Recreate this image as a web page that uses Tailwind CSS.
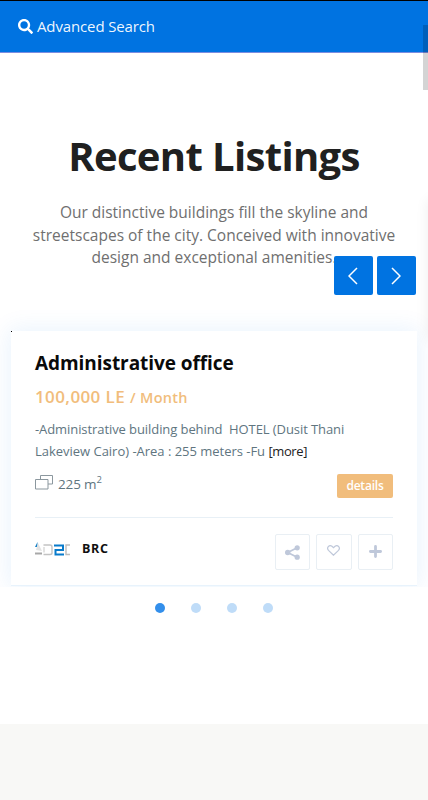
<!DOCTYPE html>
<html lang="en">
<head>
<meta charset="utf-8">
<meta name="viewport" content="width=device-width, initial-scale=1">
<title>Recent Listings</title>
<script src="https://cdn.jsdelivr.net/npm/@tailwindcss/browser@4"></script>
</head>
<body class="relative h-[800px] overflow-hidden bg-white font-['Open_Sans',sans-serif]">
<div class="flex h-full flex-col">
  <header class="flex h-[53px] shrink-0 items-center gap-1 border-t border-b border-t-black border-b-[#7d8de0] bg-[#0073e1] pb-px pl-[18px] text-white">
    <svg class="size-[15px]" viewBox="0 0 512 512" fill="currentColor"><path d="M505 442.700 405.300 343c-4.500-4.500-10.600-7-17-7H372c27.600-35.300 44-79.700 44-128C416 93.100 322.900 0 208 0S0 93.100 0 208s93.100 208 208 208c48.300 0 92.700-16.400 128-44v16.300c0 6.400 2.500 12.500 7 17l99.700 99.700c9.400 9.400 24.600 9.400 33.900 0l28.300-28.300c9.400-9.400 9.400-24.600.1-34zM208 336c-70.700 0-128-57.200-128-128 0-70.700 57.200-128 128-128 70.700 0 128 57.200 128 128 0 70.700-57.200 128-128 128z"/></svg>
    <span class="text-[15px] leading-6 tracking-[-0.13px] text-white/95">Advanced Search</span>
  </header>

  <main class="flex shrink-0 flex-col">
    <div class="pt-[79px] text-center">
      <h2 class="text-[40px] leading-[48px] font-bold tracking-[-0.65px] text-[#202020]">Recent Listings</h2>
      <p class="mt-[21px] text-[15.5px] leading-[22.5px] whitespace-nowrap text-[#6f6f6f]">Our distinctive buildings fill the skyline and<br>streetscapes of the city. Conceived with innovative<br>design and exceptional amenities.</p>
    </div>

    <div class="mt-[32.500px] h-[286px] overflow-hidden px-[11px] pt-[30px]">
      <article class="relative h-[255px] border-b border-[#e8f3fc] bg-white px-6 pt-[18px] shadow-[0_0_22px_2px_rgba(0,125,235,0.09)]">
        <i class="absolute top-0 left-0 size-px bg-black"></i>
        <h3 class="text-[19px] leading-7 font-bold tracking-[-0.06px] text-[#0a0a0a]">Administrative office</h3>
        <div class="mt-[7px] flex items-baseline gap-[5px] leading-[26px] font-semibold text-[#f1bd7c]">
          <span class="text-[17px] tracking-[0.4px]">100,000 LE</span><span class="text-[14.500px] tracking-[0.25px]">/ Month</span>
        </div>
        <p class="mt-[7px] text-[13px] leading-[22px] tracking-[-0.08px] whitespace-nowrap text-[#60757f]">-Administrative building behind&nbsp; HOTEL (Dusit Thani<br><span class="tracking-[-0.02px]">Lakeview Cairo) -Area : 255 meters -Fu </span><a class="text-[#222] tracking-[-0.4px]">[more]</a></p>
        <div class="mt-3 flex h-6 items-start justify-between">
          <div class="flex items-start gap-[5px] text-[#60757f]">
            <svg class="mt-px h-[15px] w-[18px]" viewBox="0 0 18 15" fill="none" stroke="#8b979e"><path d="M5.500 4.500v-4h12v8.500h-4.500M.5 4.500h12.500v9.500H.5z"/></svg>
            <span class="text-[13.500px] leading-5 tracking-[-0.15px]">225 m<sup class="top-[-6px] text-[9.500px]">2</sup></span>
          </div>
          <a class="flex h-6 w-[56px] items-center justify-center rounded-[2px] bg-[#f1bd7c] text-[12px] font-semibold tracking-[-0.2px] text-white">details</a>
        </div>
        <hr class="mt-[19px] border-t border-[#e8f0f6]">
        <div class="mt-4 flex h-9 items-start justify-between">
          <div class="flex items-center gap-3 pt-[5px]">
            <svg class="h-[14px] w-[35px]" viewBox="0 0 35 14" fill="none">
              <path d="M0 5 2.500 0v5z" fill="#147fc4"/>
              <path d="m3 1 4 8-6-1z" fill="#e2e2e2"/>
              <path d="M0 11.500h7" stroke="#a8a8a8" stroke-width="2"/>
              <path d="M8.500 3H15q2 0 2 2v6q0 1.500-2 1.500H8.500" stroke="#c3c3c3" stroke-width="1.400"/>
              <path d="M9 5v5.500" stroke="#d0d0d0" stroke-width="1.200"/>
              <path d="M19 3.500h9V8h-7.500v4.500H29" stroke="#087bcb" stroke-width="2"/>
              <path d="M35 3h-4v9.500h4" stroke="#bdbdbd" stroke-width="1.400"/>
            </svg>
            <span class="text-[12.500px] leading-5 font-bold tracking-[0.7px] text-[#101010]">BRC</span>
          </div>
          <div class="flex gap-[6px] text-[#bfc8da]">
            <a class="flex size-[36px] w-[35.500px] items-center justify-center rounded-[2px] border border-[#e9eff4]"><svg class="size-[15px]" viewBox="0 0 15 15" fill="currentColor"><circle cx="2.700" cy="7.500" r="2.700"/><circle cx="12.200" cy="2.800" r="2.600"/><circle cx="12.200" cy="12.200" r="2.600"/><path d="M12.200 2.800 2.700 7.500l9.500 4.700" fill="none" stroke="currentColor" stroke-width="1.700"/></svg></a>
            <a class="flex size-[36px] w-[35.500px] items-center justify-center rounded-[2px] border border-[#e9eff4]"><svg class="mb-[3px] h-[11px] w-[13px]" viewBox="0 0 13 11" fill="none" stroke="currentColor" stroke-width="1.200"><path d="M6.500 10.200 1.500 5.400C-.8 2.800 2.100-.6 5 1.200L6.500 2.600 8 1.200c2.900-1.800 5.800 1.600 3.500 4.200z"/></svg></a>
            <a class="flex size-[36px] w-[35.500px] items-center justify-center rounded-[2px] border border-[#e9eff4]"><svg class="mb-px size-[13px]" viewBox="0 0 13 13" stroke="currentColor" stroke-width="2.800" stroke-linecap="round"><path d="M6.500 1.400v10.200M1.400 6.500h10.200"/></svg></a>
          </div>
        </div>
      </article>
    </div>

    <div class="mt-4 flex justify-center gap-[25.700px]">
      <i class="size-[10px] rounded-full bg-[#338feb]"></i>
      <i class="size-[10px] rounded-full bg-[#bfdcf8]"></i>
      <i class="size-[10px] rounded-full bg-[#bfdcf8]"></i>
      <i class="size-[10px] rounded-full bg-[#bfdcf8]"></i>
    </div>
  </main>
  <footer class="mt-auto h-[76px] shrink-0 bg-[#f8f8f6]"></footer>
</div>

<!-- Carousel arrows overlap the intro copy -->
<div class="absolute top-[256px] right-3 flex gap-1 text-white">
  <button class="flex size-[39px] items-center justify-center rounded-[2px] bg-[#0073e1] pr-[2px]"><svg class="h-[18px] w-[10px]" viewBox="0 0 10 18" fill="none" stroke="currentColor" stroke-width="1.500"><path d="M9 1 1 9l8 8"/></svg></button>
  <button class="flex size-[39px] items-center justify-center rounded-[2px] bg-[#0073e1] pr-px"><svg class="h-[18px] w-[10px]" viewBox="0 0 10 18" fill="none" stroke="currentColor" stroke-width="1.500"><path d="m1 1 8 8-8 8"/></svg></button>
</div>
<!-- Off-canvas panel edge shadow -->
<div class="absolute top-[200px] left-[428px] h-[140px] w-5 shadow-[0_0_14px_rgba(0,0,0,0.07)]"></div>
<!-- Scroll indicator -->
<div class="absolute top-[25px] right-0 h-[65px] w-[5px] bg-black/17"></div>
</body>
</html>
